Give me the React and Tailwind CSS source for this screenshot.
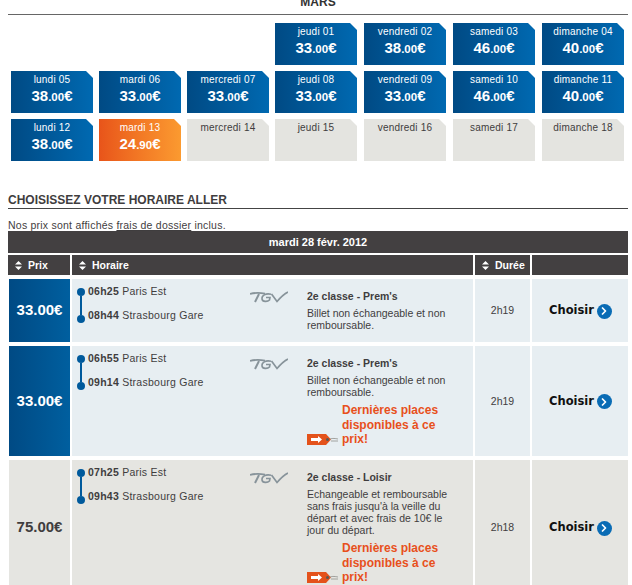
import { ChevronRight } from 'lucide-react';

const FONT = "font-['Liberation_Sans',Arial,sans-serif]";

// Calendar rows, null leaves a cell empty
const WEEKS = [
  [null, null, null,
    { day: 'jeudi 01', euros: '33', cents: '.00' },
    { day: 'vendredi 02', euros: '38', cents: '.00' },
    { day: 'samedi 03', euros: '46', cents: '.00' },
    { day: 'dimanche 04', euros: '40', cents: '.00' }],
  [{ day: 'lundi 05', euros: '38', cents: '.00' },
    { day: 'mardi 06', euros: '33', cents: '.00' },
    { day: 'mercredi 07', euros: '33', cents: '.00' },
    { day: 'jeudi 08', euros: '33', cents: '.00' },
    { day: 'vendredi 09', euros: '33', cents: '.00' },
    { day: 'samedi 10', euros: '46', cents: '.00' },
    { day: 'dimanche 11', euros: '40', cents: '.00' }],
  [{ day: 'lundi 12', euros: '38', cents: '.00' },
    { day: 'mardi 13', euros: '24', cents: '.90', best: true },
    { day: 'mercredi 14' },
    { day: 'jeudi 15' },
    { day: 'vendredi 16' },
    { day: 'samedi 17' },
    { day: 'dimanche 18' }],
];

const TRAINS = [
  {
    price: '33.00€', blue: true, h: 'h-[63px]',
    dep: '06h25', arr: '08h44', cls: "2e classe - Prem's", dur: '2h19',
    desc: 'Billet non échangeable et non remboursable.',
  },
  {
    price: '33.00€', blue: true, h: 'h-[110px]', last: true,
    dep: '06h55', arr: '09h14', cls: "2e classe - Prem's", dur: '2h19',
    desc: 'Billet non échangeable et non remboursable.',
  },
  {
    price: '75.00€', h: 'h-[135px]', last: true,
    dep: '07h25', arr: '09h43', cls: '2e classe - Loisir', dur: '2h18',
    desc: 'Echangeable et remboursable sans frais jusqu\'à la veille du départ et avec frais de 10€ le jour du départ.',
  },
];

function DayCell({ cell }) {
  if (!cell) return <div className="w-[82px] h-[42px]" />;
  const bg = !cell.euros
    ? 'bg-[#e4e4e0] text-[#3f3d3e]'
    : cell.best
      ? 'bg-gradient-to-r from-[#e8541a] to-[#fb9a30] text-white'
      : 'bg-gradient-to-r from-[#004a84] to-[#0069b1] text-white';
  return (
    <div className={`w-[82px] h-[42px] pt-[2px] text-center [clip-path:polygon(0_0,calc(100%-7px)_0,100%_7px,100%_100%,0_100%)] ${bg}`}>
      <div className="text-[10px] leading-[14px] tracking-[0.2px]">{cell.day}</div>
      {cell.euros && (
        <div className="font-bold text-[15px] leading-[18px]">
          {cell.euros}<span className="text-[11.5px]">{cell.cents}</span>€
        </div>
      )}
    </div>
  );
}

function SortIcon() {
  return (
    <svg width="7" height="9" viewBox="0 0 7 9" className="shrink-0">
      <path d="M3.5 0L7 3.6H0ZM3.5 9L7 5.4H0Z" fill="#fff" />
    </svg>
  );
}

function TgvLogo() {
  return (
    <svg width="38" height="12" viewBox="0 0 38 12" fill="none" stroke="#87939a" className="shrink-0">
      <path d="M0 3C4 1.8 10 1.8 15 2.6" strokeWidth="1.8" />
      <path d="M9 3L5 11" strokeWidth="2" />
      <path d="M21 3.2C15.5 2 11.5 4.5 12 8C12.5 11 17.5 11 19.5 9L20 6.5H16" strokeWidth="1.6" />
      <path d="M21.5 3L27 10.5C30 7 33 3.5 38 1" strokeWidth="1.7" />
    </svg>
  );
}

function PriceTag() {
  return (
    <svg width="32" height="11" viewBox="0 0 32 11" className="shrink-0 mb-[2px]">
      <path d="M0 0H19L24 5.5L19 11H0Z" fill="#e4521b" />
      <path d="M4 4H11V2L15 5.5L11 9V7H4Z" fill="#fff" />
      <circle cx="20.5" cy="5.5" r="1.5" fill="#5c5a55" />
      <path d="M23 5C26 4 28 4.5 31 5M24 7H31" stroke="#9a9a96" strokeWidth="0.9" fill="none" />
    </svg>
  );
}

function TrainRow({ train }) {
  const bg = train.blue ? 'bg-[#e7eef2]' : 'bg-[#e5e5e1]';
  return (
    <div className={`flex ${train.h} overflow-hidden`}>
      <div className={`w-[61px] ml-[1px] flex items-center justify-center font-bold text-[15px] ${train.blue ? 'bg-gradient-to-r from-[#004a84] to-[#005f9f] text-white' : 'bg-[#e5e5e1] text-[#3f3d3e]'}`}>
        {train.price}
      </div>
      <div className={`w-[401px] ml-[2px] flex ${bg}`}>
        <div className="w-[178px] pl-[5px] flex items-start gap-[3px] shrink-0">
          <div className="w-[8px] h-[35px] mt-[9px] flex flex-col items-center">
            <div className="w-[8px] h-[8px] rounded-full bg-[#005a9c] shrink-0" />
            <div className="w-[2px] flex-1 bg-[#005a9c]" />
            <div className="w-[8px] h-[8px] rounded-full bg-[#005a9c] shrink-0" />
          </div>
          <div className="text-[10.5px] leading-[24px] text-[#3f3d3e] whitespace-nowrap tracking-[0.25px]">
            <div><b>{train.dep}</b> Paris Est</div>
            <div><b>{train.arr}</b> Strasbourg Gare</div>
          </div>
        </div>
        <div className="pt-[12px] w-[57px] shrink-0"><TgvLogo /></div>
        <div className="w-[150px] pt-[10px] text-[#3f3d3e]">
          <div className="font-bold text-[10.5px] leading-[14px]">{train.cls}</div>
          <p className="mt-[4px] text-[10.5px] leading-[12px]">{train.desc}</p>
          {train.last && (
            <div className="flex items-end mt-[5px] gap-[3px]">
              <PriceTag />
              <div className="font-bold text-[12px] leading-[14.5px] text-[#e8501c]">Dernières places disponibles à ce prix!</div>
            </div>
          )}
        </div>
      </div>
      <div className={`w-[55px] ml-[2px] pt-[1px] flex items-center justify-center text-[10.5px] text-[#3f3d3e] ${bg}`}>
        {train.dur}
      </div>
      <div className={`w-[96px] ml-[2px] pl-[1px] pt-[1px] flex items-center justify-center gap-[3px] ${bg}`}>
        <span className="font-['DejaVu_Sans',sans-serif] font-bold text-[11.5px] text-[#111]">Choisir</span>
        <span className="w-[15px] h-[15px] rounded-full bg-[#0a6cb5] flex items-center justify-center">
          <ChevronRight size={12} strokeWidth={3.5} color="#fff" />
        </span>
      </div>
    </div>
  );
}

export default function App() {
  return (
    <div className={`${FONT} w-[632px] h-[585px] overflow-hidden bg-white text-[#3f3d3e]`}>
      {/* Month calendar */}
      <div className="ml-[8px] mr-[4px] border-b border-[#666] h-[15px] flex justify-center">
        <div className="font-bold text-[12px] leading-[12px] -mt-[4px] text-[#333]">MARS</div>
      </div>
      <div className="mt-[8px] ml-[11px] flex flex-col gap-[6px]">
        {WEEKS.map((week, i) => (
          <div key={i} className="grid grid-cols-[82px_82px_82px_83px_83px_83px_82px] gap-x-[6px]">
            {week.map((cell, j) => <DayCell key={j} cell={cell} />)}
          </div>
        ))}
      </div>

      {/* Outbound timetable */}
      <div className="mt-[32px] ml-[8px] mr-[4px] border-b border-[#444] font-bold text-[12px] leading-[15px] h-[16px] text-[#3f3d3e]">
        CHOISISSEZ VOTRE HORAIRE ALLER
      </div>
      <div className="mt-[10px] ml-[8px] text-[10.5px] leading-[12px] tracking-[0.23px]">
        Nos prix sont affichés <span className="underline">frais de dossier</span> inclus.
      </div>
      <div className="ml-[8px] w-[620px]">
        <div className="h-[22px] bg-[#434041] text-white font-bold text-[11px] flex items-center justify-center">
          mardi 28 févr. 2012
        </div>
        <div className="flex h-[20px] mt-[2px] pt-0 text-white text-[10.5px] font-bold">
          <div className="w-[62px] pt-[1px] bg-[#434041] flex items-center pl-[7px] gap-[6px]"><SortIcon />Prix</div>
          <div className="w-[401px] pt-[1px] ml-[2px] bg-[#434041] flex items-center pl-[7px] gap-[6px]"><SortIcon />Horaire</div>
          <div className="w-[55px] pt-[1px] ml-[2px] bg-[#434041] flex items-center pl-[7px] gap-[6px]"><SortIcon />Durée</div>
          <div className="w-[96px] ml-[2px] bg-[#434041]" />
        </div>
        <div className="mt-[4px] flex flex-col gap-[4px]">
          {TRAINS.map((t, i) => <TrainRow key={i} train={t} />)}
        </div>
      </div>
    </div>
  );
}
